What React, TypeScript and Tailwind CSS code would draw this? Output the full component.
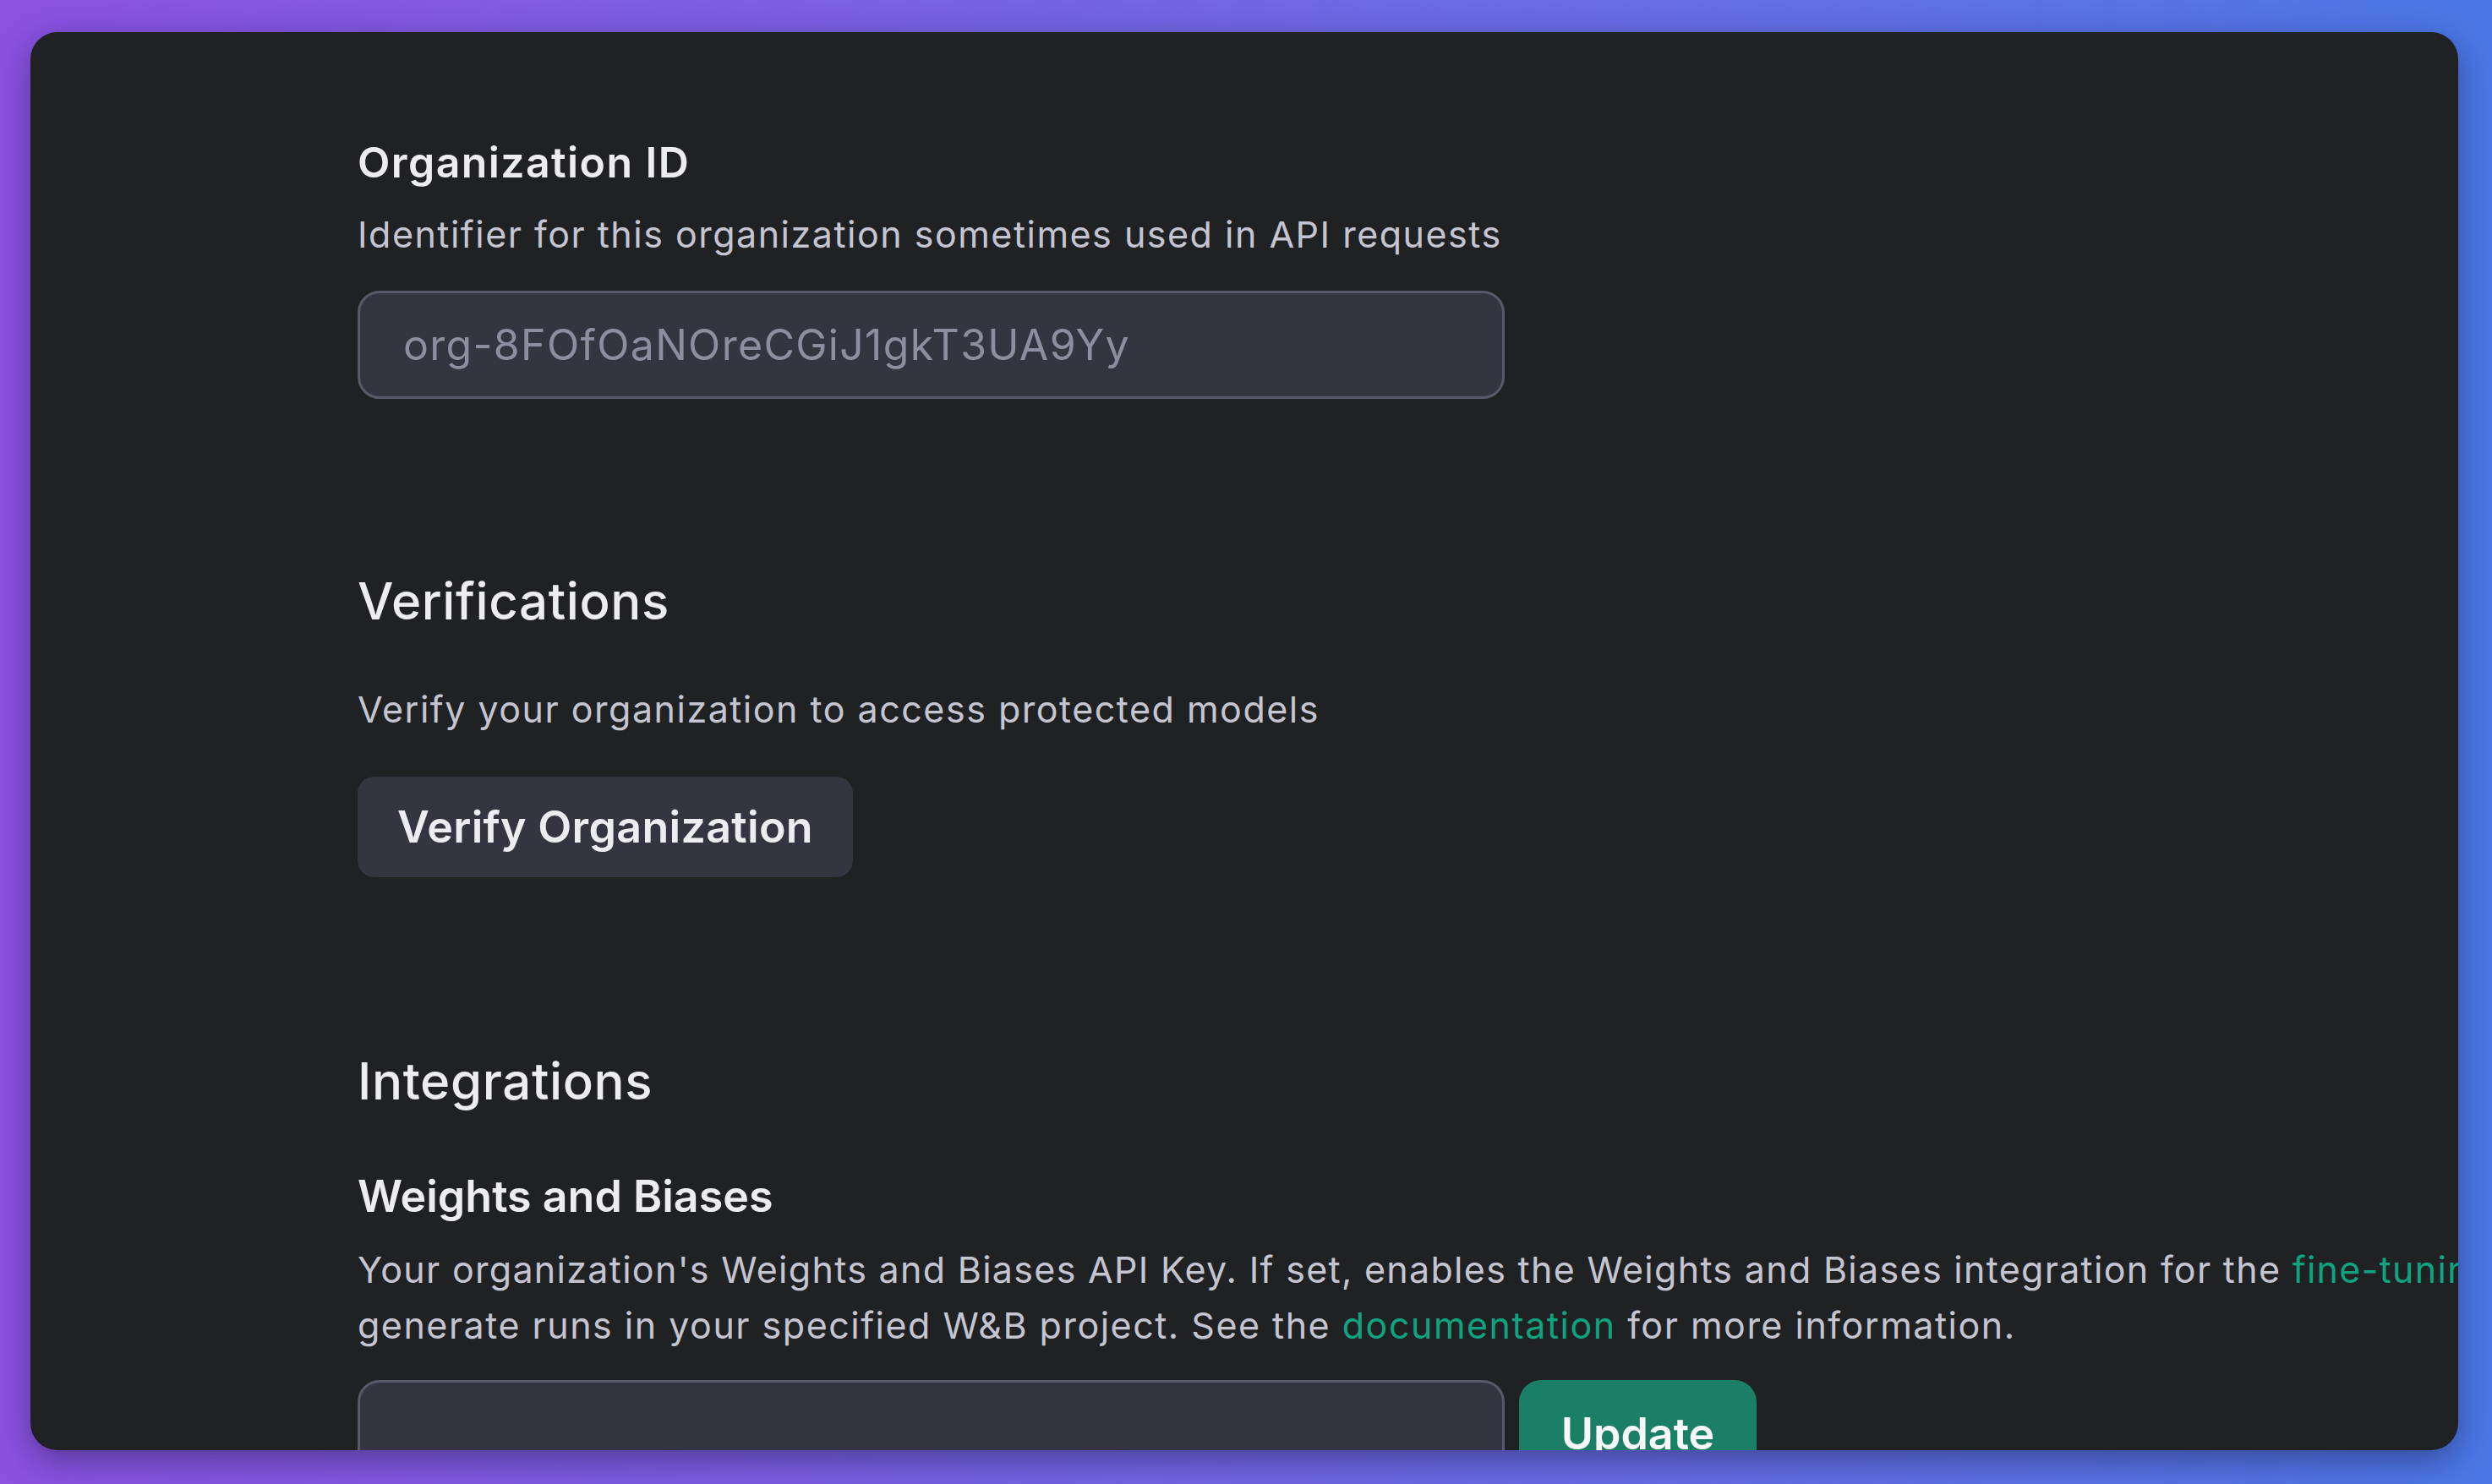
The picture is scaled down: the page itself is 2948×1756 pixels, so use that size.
import React from 'react'

const font = { fontFamily: 'Inter, "Noto Sans", sans-serif' }

function SectionTitle({ children }: { children: React.ReactNode }) {
  return <h2 className="text-[60px] leading-[72px] font-medium tracking-[0.6px] text-[#ececf1]">{children}</h2>
}

export default function App() {
  return (
    <div
      className="w-[2948px] h-[1756px] flex pt-[38px] pl-[36px] pr-[40px] pb-[40px] bg-gradient-to-r from-[#8b52e2] to-[#4b78e7] overflow-hidden"
      style={font}
    >
      <div className="flex-1 rounded-[32px] bg-[#202123] overflow-hidden shadow-[0_12px_40px_rgba(20,20,60,0.45)]">
        <div className="pl-[387px] pt-[124px] flex flex-col items-start">
          {/* organization id */}
          <h3 className="text-[50px] leading-[60px] font-semibold tracking-[1.4px] text-[#ececf1]">Organization ID</h3>
          <p className="mt-[27px] text-[43px] leading-[56px] tracking-[1.5px] text-[#c5c5d2]">
            Identifier for this organization sometimes used in API requests
          </p>
          <div className="mt-[39px] w-[1357px] h-[128px] rounded-[26px] border-[3px] border-[#585a6b] bg-[#343541] flex items-center px-[51px]">
            <span className="text-[50px] leading-[60px] tracking-[1.3px] text-[#8e8ea0]">org-8FOfOaNOreCGiJ1gkT3UA9Yy</span>
          </div>

          {/* verifications */}
          <div className="mt-[203px]">
            <SectionTitle>Verifications</SectionTitle>
          </div>
          <p className="mt-[64px] text-[43px] leading-[56px] tracking-[1.5px] text-[#c5c5d2]">
            Verify your organization to access protected models
          </p>
          <button className="mt-[52px] h-[119px] px-[47px] rounded-[20px] bg-[#343541] text-[52px] leading-[62px] font-semibold tracking-[0.3px] text-[#ececf1]">
            Verify Organization
          </button>

          {/* integrations */}
          <div className="mt-[205px]">
            <SectionTitle>Integrations</SectionTitle>
          </div>
          <h3 className="mt-[70px] text-[52px] leading-[62px] font-semibold text-[#ececf1]">Weights and Biases</h3>
          <p className="mt-[22px] text-[43px] leading-[66px] tracking-[1.3px] text-[#c5c5d2] whitespace-nowrap">
            Your organization's Weights and Biases API Key. If set, enables the Weights and Biases integration for the{' '}
            <a className="text-[#10a37f]">fine-tuning API</a> to
            <br />
            <span className="tracking-[1.5px]">
              generate runs in your specified W&amp;B project. See the{' '}
              <a className="text-[#10a37f]">documentation</a> for more information.
            </span>
          </p>
          <div className="mt-[32px] flex gap-[17px]">
            <div className="w-[1357px] h-[128px] rounded-[26px] border-[3px] border-[#585a6b] bg-[#343541]" />
            <button className="h-[128px] w-[281px] rounded-[26px] bg-[#1a7f64] text-[52px] leading-[62px] font-semibold text-[#f7f7f8]">
              Update
            </button>
          </div>
        </div>
      </div>
    </div>
  )
}
